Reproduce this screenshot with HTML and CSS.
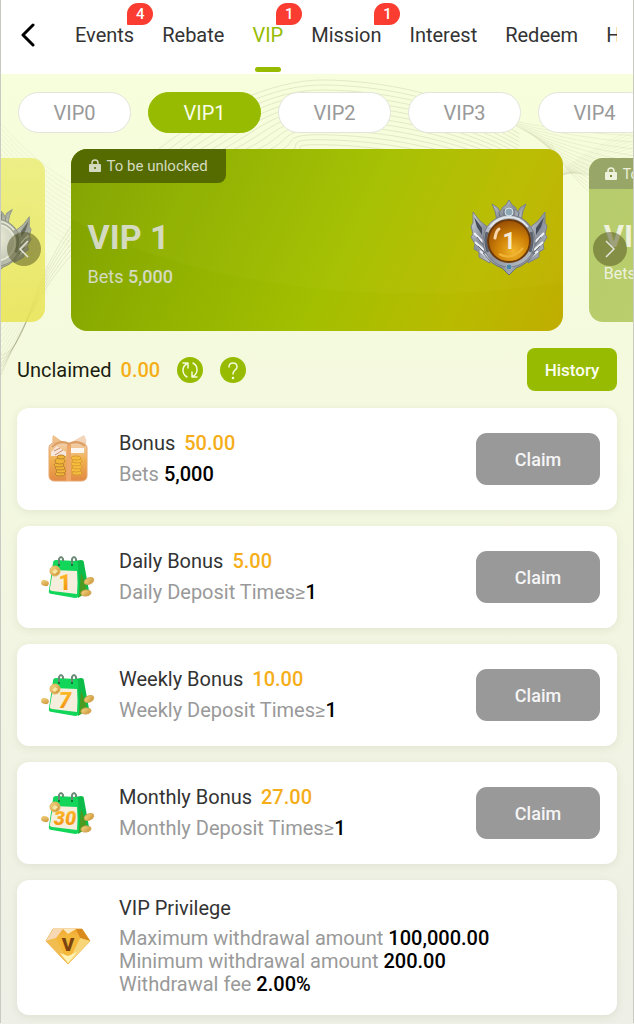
FILE: index.html
```html
<!DOCTYPE html>
<html lang="en">
<head>
  <meta charset="UTF-8" />
  <meta name="viewport" content="width=device-width, initial-scale=1.0"/>
  <title>VIP</title>
  <link rel="stylesheet" href="styles.css">
</head>
<body>
  <!-- shared drawings -->
  <svg class="defs" width="0" height="0" aria-hidden="true">
    <defs>
      <linearGradient id="silver" x1="0" y1="0" x2="1" y2="1">
        <stop offset="0" stop-color="#d5dae0"/>
        <stop offset="0.5" stop-color="#8b919c"/>
        <stop offset="1" stop-color="#c3c8cf"/>
      </linearGradient>
      <radialGradient id="orb" cx="0.6" cy="0.75" r="0.75">
        <stop offset="0" stop-color="#f2b62c"/>
        <stop offset="0.5" stop-color="#d08307"/>
        <stop offset="1" stop-color="#9a4f04"/>
      </radialGradient>
      <radialGradient id="pearl" cx="0.4" cy="0.35" r="0.75">
        <stop offset="0" stop-color="#f4f6f8"/>
        <stop offset="1" stop-color="#b9bec6"/>
      </radialGradient>
      <linearGradient id="gift" x1="0" y1="0" x2="0" y2="1">
        <stop offset="0" stop-color="#f1cfae"/>
        <stop offset="0.45" stop-color="#f0b04e"/>
        <stop offset="1" stop-color="#e28a45"/>
      </linearGradient>
      <linearGradient id="gold" x1="0" y1="0" x2="1" y2="1">
        <stop offset="0" stop-color="#f6dc8b"/>
        <stop offset="1" stop-color="#c98e30"/>
      </linearGradient>
      <linearGradient id="digit" x1="0" y1="0" x2="0" y2="1">
        <stop offset="0" stop-color="#ffc22e"/>
        <stop offset="1" stop-color="#f08c0c"/>
      </linearGradient>
      <linearGradient id="gem" x1="0" y1="0" x2="0" y2="1">
        <stop offset="0" stop-color="#f0a62a"/>
        <stop offset="1" stop-color="#fff0a0"/>
      </linearGradient>

      <symbol id="frame" viewBox="0 0 78 78">
        <path d="M3 13 L10 22 L20 30 L20 64 L9 58 L9 53 L4 50 L5 45 L1 38 L3 35 L1 27 L3 24 Z" fill="url(#silver)" stroke="#7c828c"/>
        <path d="M75 13 L68 22 L58 30 L58 64 L69 58 L69 53 L74 50 L73 45 L77 38 L75 35 L77 27 L75 24 Z" fill="url(#silver)" stroke="#7c828c"/>
        <path d="M4 18 L12 29 L12 36 L7 28 Z M74 18 L66 29 L66 36 L71 28 Z" fill="#474d58"/>
        <path d="M4 34 L13 43 M5 43 L14 51 M10 52 L18 59 M74 34 L65 43 M73 43 L64 51 M68 52 L60 59" stroke="#eef1f4" stroke-width="2"/>
        <path d="M7 38 L13 46 M8 47 L15 54 M71 38 L65 46 M70 47 L63 54" stroke="#656b76"/>
        <path d="M13 54 Q22 66 32 69 L39 76 L46 69 Q56 66 65 54 Z" fill="url(#silver)" stroke="#68707c"/>
        <path d="M22 5 L28 9 L30 13 L33 8 L36 6 L39 1 L42 6 L45 8 L48 13 L50 9 L56 5 L53 12 L51 22 L27 22 L25 12 Z" fill="url(#silver)" stroke="#78808b"/>
        <path d="M29 13 L30 20 M49 13 L48 20 M34 10 L34 19 M44 10 L44 19" stroke="#666e79"/>
        <circle cx="39" cy="42" r="26" fill="url(#silver)" stroke="#757c87"/>
        <path d="M17 33 Q14 42 18 53 M61 33 Q64 42 60 53" fill="none" stroke="#5d636e" stroke-width="3"/>
        <path d="M20 28 Q28 18 39 18 Q50 18 58 28" fill="none" stroke="#e2e6ea" stroke-width="2"/>
        <circle cx="39" cy="13" r="4" fill="#8fa6b5" stroke="#d5e2ea"/>
        <circle cx="39" cy="68" r="3" fill="#4c88a5" stroke="#a4b3be"/>
      </symbol>

      <symbol id="lock" viewBox="0 0 12 14">
        <path d="M3 6 V4 a3 3 0 0 1 6 0 V6" fill="none" stroke="currentColor" stroke-width="1.5"/>
        <rect y="5" width="12" height="8" rx="1" fill="currentColor"/>
        <circle cx="6" cy="9" r="1" fill="#556b00"/>
      </symbol>

      <symbol id="calendar" viewBox="0 0 68 68">
        <path d="M40 18 L47 17 Q50 17 50 20 L55 48 L44 55 Z" fill="#0dbb4a"/>
        <path d="M47 30 L51 40 L53 49 L45 54 Z" fill="#4c9b20"/>
        <path d="M22 17 L42 18 Q44 18 44 21 L45 51 Q45 55 41 55 L18 51 Q14 51 15 47 L19 20 Q19 17 22 17 Z" fill="#12d65a"/>
        <path d="M19 27 L43 28 Q44 40 43 51 L18 48 Q15 47 16 45 Z" fill="#f6eedc"/>
        <path d="M25 21 V16 q2 -4 4 0 v2 M38 21 V16 q2 -4 4 0 v2" fill="none" stroke="#6b8a76" stroke-width="2"/>
        <circle cx="25" cy="22" r="1" fill="#075f29"/>
        <circle cx="38" cy="22" r="1" fill="#075f29"/>
        <ellipse cx="11" cy="40" rx="4" ry="3" transform="rotate(20 11 40)" fill="url(#gold)"/>
        <ellipse cx="55" cy="38" rx="5" ry="3" transform="rotate(-25 55 38)" fill="url(#gold)" stroke="#d3a552"/>
        <ellipse cx="52" cy="50" rx="5" ry="3" transform="rotate(-8 52 50)" fill="url(#gold)" stroke="#d3a552"/>
      </symbol>

      <symbol id="coin" viewBox="0 0 68 68">
        <circle cx="21" cy="28" r="5" fill="url(#gold)" stroke="#dfb25c"/>
        <path d="M18 29 l3 -3 l3 2 l-3 3 z" fill="#f9e6a6"/>
      </symbol>
    </defs>
  </svg>

  <header class="topbar">
    <a class="back" href="#" aria-label="Back">
      <svg width="16" height="26" viewBox="0 0 16 26"><path d="M14 3 L4 13 L14 23" fill="none" stroke="#000" stroke-width="3" stroke-linecap="round" stroke-linejoin="round"/></svg>
    </a>
    <nav class="tabs">
      <a href="#">Events<span class="count">4</span></a>
      <a href="#">Rebate</a>
      <a href="#" class="current">VIP<span class="count">1</span></a>
      <a href="#">Mission<span class="count">1</span></a>
      <a href="#">Interest</a>
      <a href="#">Redeem</a>
      <a href="#">H</a>
    </nav>
  </header>

  <main>
    <svg class="waves" viewBox="0 0 634 340" aria-hidden="true"></svg>

    <div class="levels">
      <button>VIP0</button>
      <button class="active">VIP1</button>
      <button>VIP2</button>
      <button>VIP3</button>
      <button>VIP4</button>
    </div>

    <section class="carousel">
      <div class="level_card side previous">
        <svg class="medal" viewBox="0 0 78 78">
          <use href="#frame"/>
          <circle cx="39" cy="42" r="20" fill="url(#pearl)" stroke="#e7eaee" stroke-width="2"/>
        </svg>
      </div>
      <div class="level_card">
        <div class="tag"><svg class="lock"><use href="#lock"/></svg>To be unlocked</div>
        <div class="level_body">
          <div class="level_info">
            <h1>VIP 1</h1>
            <p>Bets <b>5,000</b></p>
          </div>
          <svg class="medal" viewBox="0 0 78 78">
            <use href="#frame"/>
            <circle cx="39" cy="42" r="21" fill="url(#orb)" stroke="#6a3a0c" stroke-width="2"/>
            <path d="M25 39 q1 -7 4 -9" fill="none" stroke="#f8d9ae" stroke-width="3" stroke-linecap="round"/>
            <path d="M29 55 Q42 62 53 49" fill="none" stroke="#f0b437" stroke-width="2"/>
            <text x="39" y="50" class="medal_num">1</text>
          </svg>
        </div>
      </div>
      <div class="level_card side next">
        <div class="tag"><svg class="lock"><use href="#lock"/></svg>To be unlocked</div>
        <div class="level_body">
          <div class="level_info">
            <h2>VIP 2</h2>
            <p>Bets</p>
          </div>
        </div>
      </div>
      <button class="arrow left" aria-label="Previous">
        <svg width="10" height="18" viewBox="0 0 10 18"><path d="M9 1 L1 9 L9 17" fill="none" stroke="#e4e4dc" stroke-width="1.5"/></svg>
      </button>
      <button class="arrow right" aria-label="Next">
        <svg width="10" height="18" viewBox="0 0 10 18"><path d="M1 1 L9 9 L1 17" fill="none" stroke="#e4e4dc" stroke-width="1.5"/></svg>
      </button>
    </section>

    <div class="unclaimed">
      <span>Unclaimed</span>
      <span class="amount">0.00</span>
      <button class="round" aria-label="Refresh">
        <svg width="26" height="26" viewBox="0 0 26 26" fill="none" stroke="#f4fadc" stroke-width="1.5" stroke-linecap="round" stroke-linejoin="round">
          <path d="M10 20 A7.5 7.5 0 0 1 10.500 6.500 M6 6 H11 V11"/>
          <path d="M16 6 A7.5 7.5 0 0 1 15.500 19.500 M20 20 H15 V15"/>
        </svg>
      </button>
      <button class="round" aria-label="Help">
        <svg width="26" height="26" viewBox="0 0 26 26">
          <path d="M9 10 Q9 6 13 6 Q17 6 17 10 Q17 12 15 13 Q13 15 13 17" fill="none" stroke="#f4fadc" stroke-width="1.5" stroke-linecap="round"/>
          <circle cx="13" cy="21" r="1.3" fill="#f4fadc"/>
        </svg>
      </button>
      <button class="history">History</button>
    </div>

    <section class="bonuses">
      <article class="bonus">
        <svg class="icon" viewBox="0 0 68 68">
          <path d="M32 19 L19 10 Q17 17 20 21 Z" fill="#efc08a"/>
          <path d="M34 19 L50 10 Q54 16 51 21 Z" fill="#f3d6b9"/>
          <rect x="15" y="18" width="38" height="38" rx="5" fill="url(#gift)" stroke="#e6a873"/>
          <path d="M17 27 L23 21 L32 27 V31 H17 Z" fill="#f6e6dc"/>
          <path d="M37 23 H50 V28 H37 Z" fill="#fbf6ef"/>
          <path d="M20 26 l6 -3 M21 30 l8 -5" stroke="#c98b63"/>
          <g fill="#f1b638" stroke="#bd8430">
            <ellipse cx="26" cy="49" rx="5" ry="2"/><ellipse cx="27" cy="46" rx="5" ry="2"/>
            <ellipse cx="26" cy="43" rx="5" ry="2"/><ellipse cx="25" cy="40" rx="5" ry="2"/>
            <ellipse cx="26" cy="36" rx="5" ry="3"/><ellipse cx="27" cy="32" rx="4" ry="2"/>
          </g>
          <g fill="#f5bd3d" stroke="#d99c33">
            <ellipse cx="43" cy="48" rx="5" ry="2"/><ellipse cx="42" cy="45" rx="5" ry="2"/>
            <ellipse cx="43" cy="42" rx="5" ry="2"/><ellipse cx="42" cy="39" rx="5" ry="2"/>
            <ellipse cx="43" cy="36" rx="5" ry="2"/><ellipse cx="42" cy="33" rx="5" ry="2"/>
          </g>
          <path d="M33 18 H37 V56 H32 Z" fill="#eda768"/>
          <path d="M18 22 Q27 14 35 19 Q43 14 51 21" fill="none" stroke="#dc9f65" stroke-width="2"/>
        </svg>
        <div class="text">
          <h3>Bonus <span class="amount">50.00</span></h3>
          <p>Bets <b>5,000</b></p>
        </div>
        <button class="claim">Claim</button>
      </article>

      <article class="bonus">
        <svg class="icon" viewBox="0 0 68 68">
          <use href="#calendar"/>
          <text x="31" y="47" class="day">1</text>
          <use href="#coin"/>
        </svg>
        <div class="text">
          <h3>Daily Bonus <span class="amount">5.00</span></h3>
          <p>Daily Deposit Times≥<b>1</b></p>
        </div>
        <button class="claim">Claim</button>
      </article>

      <article class="bonus">
        <svg class="icon" viewBox="0 0 68 68">
          <use href="#calendar"/>
          <text x="31" y="47" class="day slanted">7</text>
          <use href="#coin"/>
        </svg>
        <div class="text">
          <h3>Weekly Bonus <span class="amount">10.00</span></h3>
          <p>Weekly Deposit Times≥<b>1</b></p>
        </div>
        <button class="claim">Claim</button>
      </article>

      <article class="bonus">
        <svg class="icon" viewBox="0 0 68 68">
          <use href="#calendar"/>
          <text x="31" y="46" class="day slanted small">30</text>
          <use href="#coin"/>
        </svg>
        <div class="text">
          <h3>Monthly Bonus <span class="amount">27.00</span></h3>
          <p>Monthly Deposit Times≥<b>1</b></p>
        </div>
        <button class="claim">Claim</button>
      </article>

      <article class="bonus privilege">
        <svg class="icon" viewBox="0 0 68 68">
          <path d="M19 18 H48 L56 30 L34 53 L12 30 Z" fill="url(#gem)" stroke="#eab14c" stroke-linejoin="round"/>
          <path d="M19 18 L12 30 L22 27 L29 18 Z" fill="#f6d9b2"/>
          <path d="M29 18 H42 L34 23 Z" fill="#fbe7bd"/>
          <path d="M48 18 L56 30 L46 27 L42 18 Z" fill="#d98a1c"/>
          <path d="M12 30 L22 27 L34 53 Z" fill="#f2bd50"/>
          <path d="M56 30 L46 27 L34 53 Z" fill="#f7d67a"/>
          <path d="M22 27 L34 52 L46 27 L34 23 Z" fill="#f5b737"/>
          <path d="M26 42 L34 52 L43 41 L34 45 Z" fill="#fff3b8"/>
          <text x="34" y="40" class="gem_letter">V</text>
        </svg>
        <div class="text">
          <h3>VIP Privilege</h3>
          <p>Maximum withdrawal amount <b>100,000.00</b></p>
          <p>Minimum withdrawal amount <b>200.00</b></p>
          <p>Withdrawal fee <b>2.00%</b></p>
        </div>
      </article>
    </section>
  </main>

  <script src="script.js"></script>
</body>
</html>
```
FILE: styles.css
```css
* {
  box-sizing: border-box;
}

body {
  margin: 0;
  font-family: Roboto, "Liberation Sans", sans-serif;
  font-size: 20px;
  color: #333;
  background-color: #eeefe6;
  border-left: 1px solid #c9cac2;
  border-right: 1px solid #c9cac2;
  overflow-x: hidden;
}

h1, h2, h3, p {
  margin: 0;
  font-weight: 400;
}

h3 {
  font-size: 20px;
}

b {
  font-weight: 500;
}

button {
  font-family: inherit;
  border: none;
  padding: 0;
  cursor: pointer;
}

a {
  color: inherit;
  text-decoration: none;
}

.defs {
  position: absolute;
}

/* top bar */
.topbar {
  display: flex;
  height: 74px;
  padding: 0 16px 0 18px;
  background-color: #fff;
}

.back {
  flex: none;
  width: 56px;
  padding-top: 22px;
}

.tabs {
  flex: 1;
  display: flex;
  gap: 28px;
  overflow: hidden;
}

.tabs a {
  position: relative;
  flex: none;
  height: 74px;
  line-height: 71px;
}

.tabs .current {
  color: #96bb00;
}

.tabs .current::after {
  content: "";
  position: absolute;
  left: 50%;
  bottom: 2px;
  width: 26px;
  height: 5px;
  margin-left: -13px;
  border-radius: 3px;
  background-color: #96bb00;
}

.count {
  position: absolute;
  top: 3px;
  left: calc(100% - 7px);
  width: 26px;
  height: 22px;
  border-radius: 11px 11px 11px 1px;
  background-color: #fb3d31;
  color: #fff;
  font-size: 15px;
  font-weight: 500;
  line-height: 22px;
  text-align: center;
}

/* page */
main {
  position: relative;
  z-index: 0;
  padding-bottom: 8px;
  background: linear-gradient(#f7fedb, #f4f9df 35%, #eeefe6);
}

.waves {
  position: absolute;
  top: 0;
  left: 0;
  z-index: -1;
  width: 100%;
  fill: none;
  stroke: #77784a;
}

.levels {
  display: flex;
  gap: 17px;
  padding: 18px 0 16px 17px;
  overflow: hidden;
}

.levels button {
  flex: none;
  width: 113px;
  height: 41px;
  border: 1px solid #e3e4dc;
  border-radius: 21px;
  background-color: #fff;
  color: #999;
  font-size: 20px;
}

.levels .active {
  border-color: #96bb00;
  background-color: #96bb00;
  color: #fafde8;
}

/* carousel */
.carousel {
  position: relative;
  display: flex;
  justify-content: center;
  align-items: center;
  gap: 4%;
  padding-bottom: 17px;
  overflow: hidden;
}

.level_card {
  flex: none;
  width: 78%;
  height: 182px;
  border-radius: 16px;
  overflow: hidden;
  color: #d4dac0;
  background:
    radial-gradient(ellipse 90% 110% at 70% -30%, rgba(255, 255, 120, 0.03) 99%, transparent),
    linear-gradient(115deg, #7fa000 0%, #8fb000 25%, #a3bf00 55%, #b9bb00 80%, #c0ad00 100%);
}

.tag {
  display: flex;
  align-items: center;
  gap: 6px;
  width: 155px;
  height: 34px;
  padding-left: 18px;
  border-bottom-right-radius: 8px;
  background-color: #556b00;
  font-size: 15px;
  white-space: nowrap;
}

.lock {
  flex: none;
  width: 12px;
  height: 14px;
}

.level_body {
  display: flex;
  justify-content: space-between;
  padding: 16px 14px 0 17px;
}

.level_info {
  padding-top: 18px;
}

.level_info h1 {
  font-size: 34px;
  font-weight: 700;
  line-height: 40px;
}

.level_info p {
  margin-top: 8px;
  font-size: 18px;
  line-height: 24px;
}

.medal {
  flex: none;
  width: 80px;
  height: 78px;
}

.medal_num {
  font-size: 23px;
  font-weight: 700;
  fill: #f3ead8;
  text-anchor: middle;
}

.side {
  width: 70%;
  height: 164px;
  border-radius: 14px;
}

.previous {
  display: flex;
  justify-content: flex-end;
  align-items: center;
  padding-right: 12px;
  background: linear-gradient(rgba(236, 238, 130, 0.95), rgba(232, 226, 72, 0.8));
}

.previous .medal {
  width: 72px;
  height: 70px;
  opacity: 0.8;
}

.next {
  background: linear-gradient(115deg, #b6cb6c, #c3d66c);
  color: #eef2dc;
}

.next .tag {
  height: 31px;
  padding-left: 16px;
  background-color: #98a768;
  font-size: 14px;
}

.next .level_body {
  padding: 14px 12px 0 15px;
}

.next .level_info {
  padding-top: 16px;
}

.next h2 {
  font-size: 31px;
  font-weight: 700;
  line-height: 36px;
}

.next p {
  font-size: 16px;
  line-height: 22px;
}

.arrow {
  position: absolute;
  top: 50%;
  display: flex;
  align-items: center;
  justify-content: center;
  width: 34px;
  height: 34px;
  margin-top: -17px;
  border-radius: 50%;
  background-color: rgba(80, 80, 30, 0.5);
}

.left {
  left: 6px;
}

.right {
  right: 6px;
}

/* unclaimed row */
.unclaimed {
  display: flex;
  align-items: center;
  padding: 0 16px;
  color: #1b1d10;
}

.amount {
  margin-left: 9px;
  color: #f5ae19;
  font-weight: 500;
}

h3 .amount {
  margin-left: 4px;
}

.round {
  width: 26px;
  height: 26px;
  margin-left: 17px;
  border-radius: 50%;
  background-color: #96bb00;
}

.round svg {
  display: block;
}

.history {
  width: 90px;
  height: 43px;
  margin-left: auto;
  border-radius: 8px;
  background-color: #96bb00;
  color: #fbfdf0;
  font-size: 17px;
  font-weight: 500;
}

/* bonus list */
.bonuses {
  display: flex;
  flex-direction: column;
  gap: 16px;
  padding: 17px 16px 0;
}

.bonus {
  display: flex;
  align-items: center;
  gap: 17px;
  padding: 17px;
  border-radius: 12px;
  background-color: #fff;
  box-shadow: 0 2px 8px rgba(90, 100, 60, 0.1);
}

.icon {
  flex: none;
  width: 68px;
  height: 68px;
}

.text {
  flex: 1;
}

.text h3 {
  line-height: 31px;
}

.text p {
  color: #999;
  line-height: 31px;
}

.text b {
  color: #000;
}

.claim {
  width: 124px;
  height: 52px;
  border-radius: 11px;
  background-color: #999;
  color: #f5f5f5;
  font-size: 18px;
  font-weight: 500;
}

.privilege {
  padding: 13px 17px 19px;
}

.privilege h3 {
  margin-bottom: 3px;
}

.privilege p {
  line-height: 23px;
}

.day {
  font-size: 22px;
  font-weight: 900;
  fill: url(#digit);
  text-anchor: middle;
}

.slanted {
  font-style: italic;
}

.small {
  font-size: 20px;
}

.gem_letter {
  font-size: 19px;
  font-weight: 900;
  fill: #7a4310;
  text-anchor: middle;
}
```
FILE: script.js
```js
const waves = document.querySelector(".waves");

function addLine(d, opacity) {
  const path = document.createElementNS("http://www.w3.org/2000/svg", "path");
  path.setAttribute("d", d);
  path.setAttribute("stroke-opacity", opacity);
  waves.appendChild(path);
}

// big arc behind the level buttons
for (let i = 0; i < 14; i++) {
  addLine(`M${150 + i * 10} 82 C${200 + i * 10} ${40 + i * 3} 270 ${5 + i * 5} 325 ${6 + i * 5} S450 ${18 + i * 5} 520 ${60 + i * 4}`, 0.16);
}

// right corner
for (let i = 0; i < 14; i++) {
  addLine(`M${500 + i * 4} ${44 + i * 2} Q570 ${60 + i * 4} 640 ${62 + i * 7}`, 0.1);
  addLine(`M${530 + i * 3} ${120 - i * 2} Q580 ${80 + i * 2} 640 ${52 + i * 4}`, 0.07);
}

// left side
for (let i = 0; i < 14; i++) {
  addLine(`M0 ${50 + i * 5} Q35 ${90 + i * 5} 75 ${112 + i * 5}`, 0.07);
  addLine(`M0 ${215 + i * 6} Q25 ${205 + i * 3} 46 ${180 + i * 3}`, 0.08);
}

// ribbon
for (let i = 0; i < 6; i++) {
  addLine(`M72 ${150 + i * 6} Q${44 + i} ${190 + i * 3} 30 ${235 + i} T0 ${282 + i * 4}`, 0.14);
}
```
